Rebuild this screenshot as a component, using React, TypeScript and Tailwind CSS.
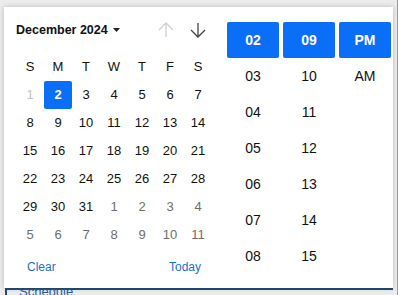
import React from "react";

const weekdays = ["S", "M", "T", "W", "T", "F", "S"];

type Day = { n: number; kind: "disabled" | "normal" | "selected" | "other" };

function buildDays(): Day[] {
  const days: Day[] = [];
  days.push({ n: 1, kind: "disabled" });
  days.push({ n: 2, kind: "selected" });
  for (let i = 3; i <= 31; i++) days.push({ n: i, kind: "normal" });
  for (let i = 1; i <= 11; i++) days.push({ n: i, kind: "other" });
  return days;
}

function Col({ items }: { items: string[] }) {
  return (
    <div className="flex w-[52px] flex-col">
      {items.map((t, i) =>
        i === 0 ? (
          <div
            key={t}
            className="flex h-[36px] items-center justify-center rounded-[2px] bg-[#0b6ef7] text-[14px] font-bold text-white"
          >
            {t}
          </div>
        ) : (
          <div key={t} className="flex h-[36px] items-center justify-center text-[14px] text-[#111]">
            {t}
          </div>
        )
      )}
    </div>
  );
}

export default function App() {
  const days = buildDays();
  return (
    <div className="relative h-[295px] w-[398px] overflow-hidden border-r border-[#9a9a9a] bg-[#ececec] font-['Liberation_Sans',Arial,sans-serif]">
      <div className="pt-[288px] pl-[5px] pr-[4px]">
        <div className="h-[20px] border-l-2 border-t-2 border-[#1f4e7a] pl-[12px]">
          <div className="-mt-[6px] text-[13px] leading-[15px] text-[#2a5d9a]">Schedule</div>
        </div>
      </div>

      <div className="absolute left-[4px] top-[7px] flex h-[281px] w-[389px] bg-white shadow-[0_0_5px_rgba(0,0,0,0.22)]">
        <div className="flex w-[208px] flex-col pl-[12px]">
          <div className="flex h-[46px] items-center pr-[6px]">
            <span className="text-[12.5px] font-bold text-[#111]">December 2024</span>
            <svg width="7" height="4" viewBox="0 0 7 4" className="ml-[5px]">
              <path d="M0 0 L7 0 L3.5 4 Z" fill="#222" />
            </svg>
            <div className="ml-auto flex gap-[16px]">
              <svg width="16" height="16" viewBox="0 0 16 16" fill="none" stroke="#cfcfcf" strokeWidth="1.3">
                <path d="M8 1 V15 M1 8 L8 1 L15 8" />
              </svg>
              <svg width="16" height="16" viewBox="0 0 16 16" fill="none" stroke="#444" strokeWidth="1.3">
                <path d="M8 1 V15 M1 8 L8 15 L15 8" />
              </svg>
            </div>
          </div>
          <div className="grid w-[196px] grid-cols-7">
            {weekdays.map((w, i) => (
              <div key={i} className="flex h-[28px] items-center justify-center text-[13px] text-[#111]">
                {w}
              </div>
            ))}
            {days.map((d, i) => {
              if (d.kind === "selected")
                return (
                  <div key={i} className="flex h-[28px] items-center justify-center rounded-[2px] bg-[#0b6ef7] text-[13px] font-bold text-white">
                    {d.n}
                  </div>
                );
              const color =
                d.kind === "disabled" ? "text-[#c2c2c2]" : d.kind === "other" ? "text-[#6e6e6e]" : "text-[#111]";
              return (
                <div key={i} className={`flex h-[28px] items-center justify-center text-[13px] ${color}`}>
                  {d.n}
                </div>
              );
            })}
          </div>
          <div className="flex h-[36px] w-[196px] items-center justify-between px-[11px] text-[12px] text-[#1a6fce]">
            <span>Clear</span>
            <span>Today</span>
          </div>
        </div>
        <div className="ml-[15px] flex gap-[4px] overflow-hidden pt-[15px]">
          <Col items={["02", "03", "04", "05", "06", "07", "08"]} />
          <Col items={["09", "10", "11", "12", "13", "14", "15"]} />
          <Col items={["PM", "AM"]} />
        </div>
      </div>
    </div>
  );
}
